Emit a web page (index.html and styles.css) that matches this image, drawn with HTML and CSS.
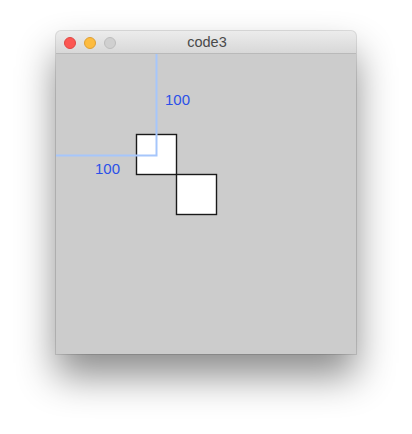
FILE: index.html
```html
<!DOCTYPE html>
<html>
<head>
<meta charset="utf-8">
<link rel="stylesheet" href="styles.css">
</head>
<body>
<div class="stage">
  <div class="window">
    <div class="titlebar">
      <div class="lights">
        <span class="light red"></span>
        <span class="light yellow"></span>
        <span class="light gray"></span>
      </div>
      <div class="title">code3</div>
    </div>
    <svg class="canvas" width="300" height="300" viewBox="0 0 300 300">
      <rect x="80.5" y="80.5" width="40" height="40" class="box"/>
      <rect x="120.5" y="120.5" width="40" height="40" class="box"/>
      <path d="M100.5 0 V101.5 H0" class="guide"/>
      <text x="109" y="51" class="label">100</text>
      <text x="39" y="120" class="label">100</text>
    </svg>
  </div>
</div>
</body>
</html>
```
FILE: styles.css
```css
html, body {
  margin: 0;
  padding: 0;
  background: #ffffff;
}
.stage {
  padding: 31px 0 0 56px;
  height: 403px;
}
.window {
  width: 300px;
  border-radius: 5px 5px 0 0;
  overflow: hidden;
  box-shadow: 0 0 0 1px rgba(0,0,0,0.12), 0 22px 38px rgba(0,0,0,0.45);
  background: #cccccc;
}
.titlebar {
  position: relative;
  height: 22px;
  background: linear-gradient(#ececec, #d8d8d8);
  border-bottom: 1px solid #b9b9b9;
  display: flex;
  align-items: center;
  justify-content: center;
}
.lights {
  position: absolute;
  left: 8px;
  top: 6px;
  display: flex;
  gap: 8px;
}
.light {
  width: 12px;
  height: 12px;
  border-radius: 50%;
  box-sizing: border-box;
}
.red { background: #fc5753; border: 1px solid #df4744; }
.yellow { background: #fdbc40; border: 1px solid #de9f34; }
.gray { background: #d0d0d0; border: 1px solid #bdbdbd; }
.title {
  font-family: "Liberation Sans", Arial, sans-serif;
  font-size: 14.5px;
  color: #4a4a4a;
  padding-left: 2px;
}
.canvas {
  display: block;
  background: #cccccc;
}
.guide {
  fill: none;
  stroke: #a6c6fb;
  stroke-width: 2;
}
.box {
  fill: #ffffff;
  stroke: #1a1a1a;
  stroke-width: 1.4;
}
.label {
  font-family: "Liberation Sans", Arial, sans-serif;
  font-size: 15px;
  fill: #2b50e8;
}
```
